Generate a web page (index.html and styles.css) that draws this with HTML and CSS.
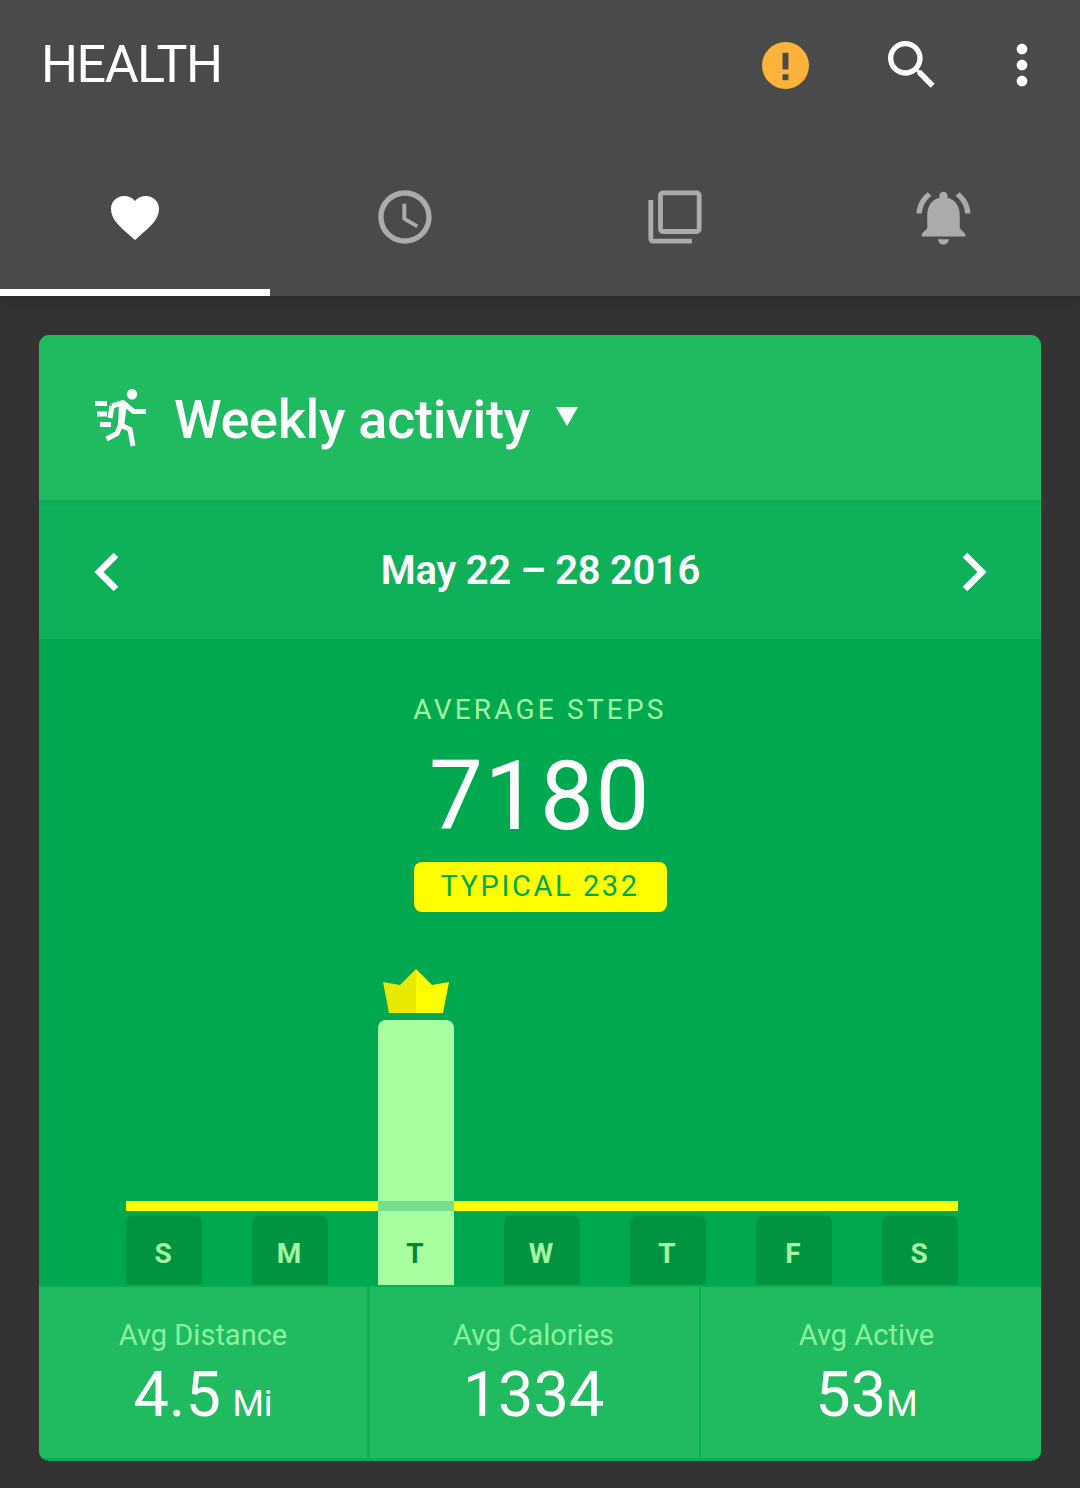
FILE: index.html
```html
<!DOCTYPE html>
<html lang="en">
<head>
<meta charset="utf-8">
<title>Health</title>
<link rel="stylesheet" href="styles.css">
</head>
<body>
<header class="header">
  <div class="appbar">
    <h1 class="app-title">HEALTH</h1>
    <svg class="alert-icon" viewBox="0 0 48 48"><circle cx="24" cy="24" r="24" fill="#fbb33c"/><rect x="21" y="11" width="6" height="17" fill="#4a4a4a"/><rect x="21" y="33" width="6" height="6" fill="#4a4a4a"/></svg>
    <svg class="search-icon" viewBox="0 0 24 24"><path fill="#fff" d="M15.5 14h-.79l-.28-.27C15.41 12.59 16 11.11 16 9.5 16 5.91 13.09 3 9.5 3S3 5.91 3 9.5 5.91 16 9.5 16c1.61 0 3.09-.59 4.23-1.57l.27.28v.79l5 4.99L20.49 19l-4.99-5zm-6 0C7.01 14 5 11.99 5 9.5S7.01 5 9.5 5 14 7.01 14 9.5 11.99 14 9.5 14z"/></svg>
    <svg class="more-icon" viewBox="0 0 24 24"><path fill="#fff" d="M12 8c1.1 0 2-.9 2-2s-.9-2-2-2-2 .9-2 2 .9 2 2 2zm0 2c-1.1 0-2 .9-2 2s.9 2 2 2 2-.9 2-2-.9-2-2-2zm0 6c-1.1 0-2 .9-2 2s.9 2 2 2 2-.9 2-2-.9-2-2-2z"/></svg>
  </div>
  <nav class="tabs">
    <div class="tab tab-active">
      <svg class="tab-heart" viewBox="0 0 48 46" preserveAspectRatio="none"><path fill="#fff" d="M24 46 20.6 42.8C8 31.4 0 24.200 0 13.300 0 5.800 5.800 0 13.200 0 17.400 0 21.400 2 24 5.100 26.600 2 30.600 0 34.800 0 42.200 0 48 5.800 48 13.300 48 24.200 40 31.400 27.400 42.800Z"/></svg>
    </div>
    <div class="tab">
      <svg class="tab-icon" viewBox="0 0 24 24"><path fill="#ababab" d="M11.99 2C6.47 2 2 6.48 2 12s4.470 10 9.990 10C17.520 22 22 17.520 22 12S17.520 2 11.990 2zM12 20c-4.420 0-8-3.580-8-8s3.580-8 8-8 8 3.580 8 8-3.580 8-8 8z"/><path fill="#ababab" d="M12.500 7H11v6l5.250 3.150.75-1.230-4.500-2.670z"/></svg>
    </div>
    <div class="tab">
      <svg class="tab-library" viewBox="0 0 24 24"><path fill="#ababab" d="M3 5H1v16c0 1.100.9 2 2 2h16v-2H3V5zm18-4H7c-1.100 0-2 .9-2 2v14c0 1.100.9 2 2 2h14c1.100 0 2-.9 2-2V3c0-1.100-.9-2-2-2zm0 16H7V3h14v14z"/></svg>
    </div>
    <div class="tab">
      <svg class="tab-bell" viewBox="0 0 24 24"><path fill="#ababab" d="M7.580 4.080L6.150 2.650C3.750 4.480 2.170 7.300 2.030 10.500h2c.15-2.650 1.510-4.970 3.550-6.420zm12.390 6.420h2c-.15-3.200-1.730-6.020-4.120-7.850l-1.420 1.430c2.020 1.450 3.390 3.770 3.540 6.420zM18 11c0-3.070-1.640-5.640-4.500-6.320V4c0-.83-.67-1.500-1.500-1.500s-1.500.67-1.500 1.500v.68C7.630 5.360 6 7.920 6 11v5l-2 2v1h16v-1l-2-2v-5zm-6 11c.14 0 .27-.01.4-.04.65-.14 1.180-.58 1.440-1.180.1-.24.15-.5.15-.78h-4c.01 1.100.9 2 2.010 2z"/></svg>
    </div>
  </nav>
</header>

<main class="card">
  <section class="card-title">
    <svg class="run-icon" viewBox="0 0 52 58">
      <circle cx="37" cy="5.200" r="5.200" fill="#fff"/>
      <g fill="none" stroke="#fff" stroke-width="5">
        <path d="M0 14.500H12M2 25H12M5 35.500H16"/>
        <path d="M17 17 28 13.500 38.500 22.500H51"/>
        <path d="M28 13.500 25.500 36 35 40.500 38 57"/>
        <path d="M17 17 15 29"/>
        <path d="M25.500 36 22 44.500 11.500 50"/>
      </g>
      <path fill="#fff" d="M24 14H32L29 38H23Z"/>
    </svg>
    <h2 class="card-heading">Weekly activity</h2>
    <span class="caret"></span>
  </section>

  <section class="date-row">
    <svg class="chevron" viewBox="0 0 28 40"><path fill="none" stroke="#fff" stroke-width="6.500" d="M24 3 7 20 24 37"/></svg>
    <div class="date-label">May 22 – 28 2016</div>
    <svg class="chevron" viewBox="0 0 28 40"><path fill="none" stroke="#fff" stroke-width="6.500" d="M4 3 21 20 4 37"/></svg>
  </section>

  <section class="summary">
    <div class="summary-label">AVERAGE STEPS</div>
    <div class="summary-value">7180</div>
    <div class="typical-badge">TYPICAL 232</div>
    <div class="chart">
      <div class="goal-line"></div>
      <div class="day"><span>S</span></div>
      <div class="day"><span>M</span></div>
      <div class="best">
        <svg class="crown" viewBox="0 0 66 44"><path fill="#e8e800" d="M33 0 17 16 0 13 6 44H33Z"/><path fill="#ffff00" d="M33 0 49 16 66 13 60 44H33Z"/></svg>
        <div class="day day-best"><i class="day-band"></i><span>T</span></div>
      </div>
      <div class="day"><span>W</span></div>
      <div class="day"><span>T</span></div>
      <div class="day"><span>F</span></div>
      <div class="day"><span>S</span></div>
    </div>
  </section>

  <section class="stats">
    <div class="stat stat-distance">
      <div class="stat-label">Avg Distance</div>
      <div class="stat-value stat-value-tight">4.5 <small>Mi</small></div>
    </div>
    <div class="stat stat-calories">
      <div class="stat-label">Avg Calories</div>
      <div class="stat-value">1334</div>
    </div>
    <div class="stat stat-active">
      <div class="stat-label">Avg Active</div>
      <div class="stat-value">53<small>M</small></div>
    </div>
  </section>
</main>
</body>
</html>
```

FILE: styles.css
```css
* { box-sizing: border-box; }
html, body { margin: 0; padding: 0; }
body {
  width: 1080px;
  height: 1488px;
  overflow: hidden;
  background: #333333;
  font-family: Roboto, "Liberation Sans", sans-serif;
}
.header {
  height: 296px;
  background: #4a4a4a;
  box-shadow: 0 2px 14px rgba(0, 0, 0, 0.25);
  position: relative;
}
.appbar {
  height: 130px;
  display: flex;
  align-items: center;
  padding-left: 41px;
}
.app-title {
  margin: 0 auto 0 0;
  color: #fff;
  font-weight: 400;
  font-size: 52px;
  letter-spacing: -1.500px;
  line-height: 60px;
}
.alert-icon { width: 47px; height: 47px; margin-right: 71px; }
.search-icon { width: 64px; height: 64px; margin-right: 46px; }
.more-icon { width: 64px; height: 64px; margin-right: 26px; }
.tabs { display: flex; height: 166px; }
.tab {
  width: 270px;
  display: flex;
  align-items: center;
  justify-content: center;
  padding-top: 15px;
  border-bottom: 7px solid transparent;
}
.tab-active { border-bottom-color: #fff; }
.tab-heart { width: 48px; height: 44px; margin-top: 2px; }
.tab-icon { width: 64px; height: 64px; margin-right: 1px; }
.tab-library { width: 58px; height: 58px; margin-right: 1px; }
.tab-bell { width: 65px; height: 65px; margin-right: 3px; }

.card {
  width: 1002px;
  margin: 39px 0 0 39px;
  height: 1126px;
  border-radius: 10px;
  overflow: hidden;
  background: #0bad56;
  display: flex;
  flex-direction: column;
}
.card-title {
  height: 165px;
  background: #20bb60;
  display: flex;
  align-items: center;
  padding-left: 56px;
}
.run-icon { width: 52px; height: 58px; margin-right: 27px; }
.card-heading {
  margin: 4px 26px 0 0;
  color: #fff;
  font-size: 54px;
  font-weight: 500;
  letter-spacing: -0.300px;
  line-height: 60px;
}
.caret {
  width: 0;
  height: 0;
  border-left: 11px solid transparent;
  border-right: 11px solid transparent;
  border-top: 19px solid #fff;
  margin-bottom: 2px;
}
.date-row {
  height: 134px;
  margin-top: 5px;
  background: #0eb059;
  display: flex;
  align-items: center;
  justify-content: space-between;
  padding: 0 52px 0 53px;
}
.chevron { width: 28px; height: 40px; }
.date-label {
  color: #fff;
  font-size: 40px;
  font-weight: 600;
  letter-spacing: -0.300px;
  margin-bottom: 3px;
}
.summary {
  height: 646px;
  background: #00a94f;
  display: flex;
  flex-direction: column;
  align-items: center;
  padding-top: 53px;
}
.summary-label {
  color: #a5f5a0;
  font-size: 28px;
  line-height: 36px;
  letter-spacing: 3.200px;
}
.summary-value {
  color: #fff;
  font-size: 96px;
  line-height: 112px;
  margin-top: 12px;
  letter-spacing: 1.500px;
}
.typical-badge {
  width: 253px;
  height: 50px;
  margin-top: 10px;
  border-radius: 8px;
  background: #ffff00;
  color: #00a94f;
  font-size: 29px;
  line-height: 48px;
  text-align: center;
  letter-spacing: 2.600px;
}
.chart {
  width: 832px;
  margin-top: auto;
  margin-left: 4px;
  display: flex;
  align-items: flex-end;
  justify-content: space-between;
  position: relative;
}
.goal-line {
  position: absolute;
  left: 0;
  right: 0;
  bottom: 74px;
  height: 10px;
  background: #ffff00;
}
.day {
  width: 76px;
  height: 70px;
  border-radius: 8px 8px 0 0;
  background: #009440;
  color: #a5f5a0;
  font-size: 28px;
  font-weight: 700;
  display: flex;
  align-items: center;
  justify-content: center;
  padding: 6px 2px 0 0;
}
.best {
  display: flex;
  flex-direction: column;
  align-items: center;
  position: relative;
}
.crown { width: 66px; height: 44px; margin-bottom: 7px; }
.day-best {
  height: 265px;
  background: #a8ffa0;
  color: #00873c;
  border-radius: 8px 8px 0 0;
  align-items: flex-end;
  padding: 0 2px 15px 0;
  position: relative;
}
.day-band {
  position: absolute;
  left: 0;
  right: 0;
  bottom: 74px;
  height: 10px;
  background: #74e08b;
}
.stats {
  height: 171px;
  margin-top: 2px;
  display: flex;
  gap: 2px;
}
.stat {
  background: #20ba60;
  display: flex;
  flex-direction: column;
  align-items: center;
  padding-top: 28px;
}
.stat-distance { width: 328px; margin-right: 1px; }
.stat-calories { width: 329px; padding-right: 2px; }
.stat-active { width: 340px; padding-right: 9px; }
.stat-label {
  color: #8cf29a;
  font-size: 29px;
  line-height: 40px;
}
.stat-value {
  color: #fff;
  font-size: 63px;
  line-height: 80px;
}
.stat-value-tight { word-spacing: -4px; }
.stat-value small { font-size: 36px; }
```
